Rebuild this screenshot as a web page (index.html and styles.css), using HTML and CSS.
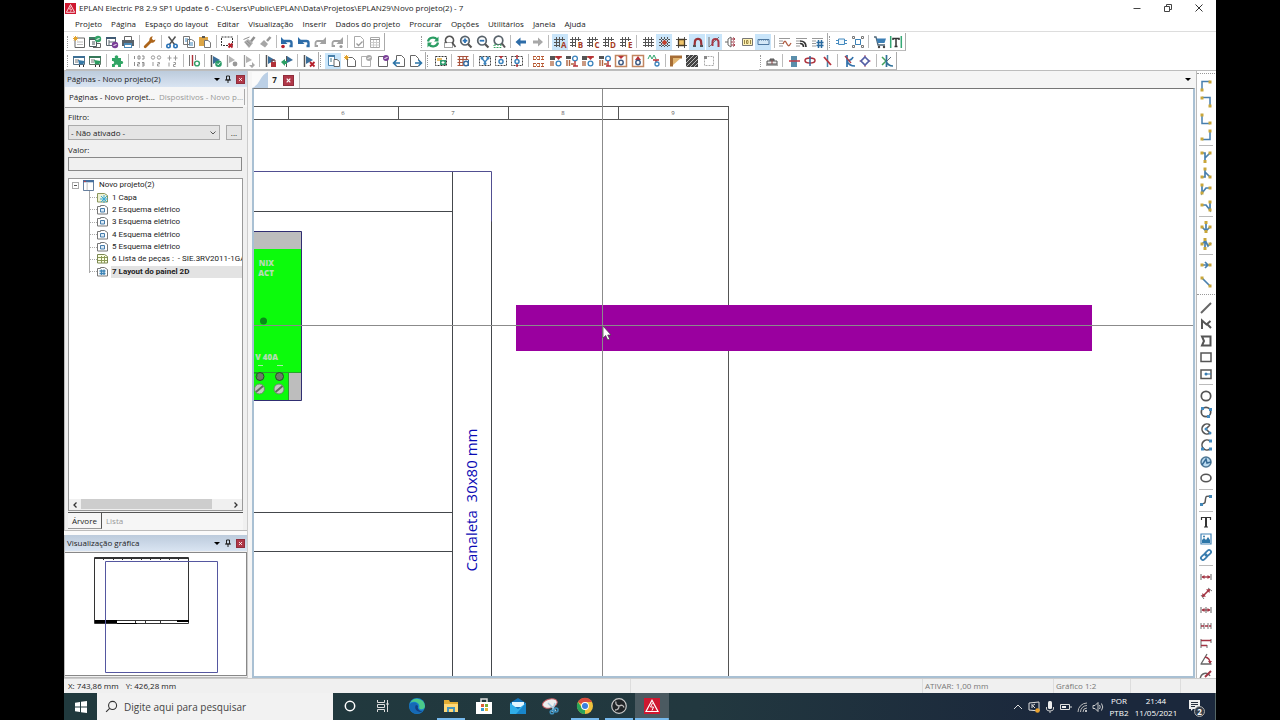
FILE: index.html
```html
<!DOCTYPE html>
<html lang="pt-BR">
<head>
<meta charset="utf-8">
<title>EPLAN Electric P8 2.9 SP1 Update 6</title>
<link rel="stylesheet" href="styles.css">
</head>
<body>
<svg class="sprite" aria-hidden="true">
  <defs>
    <!-- file and edit -->
    <symbol id="page-new" viewBox="0 0 16 16"><path d="M4 4h9.500v9.500h-9.500z" fill="#fff" stroke="#666"/><path d="M6 8h6M6 10.500h6" stroke="#bbb"/><path d="M4.500 2v5M2 4.500h5M2.700 2.700l3.600 3.600M6.300 2.700l-3.600 3.600" stroke="#e3a32c"/></symbol>
    <symbol id="page-open" viewBox="0 0 16 16"><path d="M2.500 3.500h7v9h-7zM2.500 5.500h7M5 8h3M5 10h3" fill="#fff" stroke="#4d5a5c"/><path d="M2 3h8v2H2z" fill="#3f7d64"/><circle cx="11" cy="5" r="3.200" fill="#35a46a"/><path d="M9.500 5.500l3-1" stroke="#fff"/><path d="M10 9.500h3.500v4H6" fill="none" stroke="#666"/></symbol>
    <symbol id="page-close" viewBox="0 0 16 16"><path d="M2.500 3.500h9v8h-9zM5 6v5M5 8h6" fill="#fff" stroke="#5c6870"/><path d="M2 3h10v2H2z" fill="#3f5a74"/><circle cx="11" cy="11" r="3.200" fill="#7b3f98"/><path d="M9.500 11.500l3-1" stroke="#fff"/></symbol>
    <symbol id="printer" viewBox="0 0 16 16"><path d="M4.500 2.500h7v4h-7z" fill="#fff" stroke="#666"/><path d="M2 6h12v6H2z" fill="#59636b"/><path d="M4 9h8v5H4z" fill="#4c8ab8"/><path d="M5 11h6v2H5z" fill="#fff"/></symbol>
    <symbol id="wrench" viewBox="0 0 16 16"><path d="M3.200 12.800L9 7" stroke="#ad651b" stroke-width="2.800" stroke-linecap="round"/><path d="M13.500 5.500a3.300 3.300 0 0 1-5.500 2.300a3.500 3.500 0 0 1 2.800-5.600L9.800 4.600l1.500 1.700z" fill="#ad651b"/></symbol>
    <symbol id="scissors" viewBox="0 0 16 16"><path d="M4.500 2.500l6 8M11.500 2.500l-6 8" stroke="#555" stroke-width="1.500"/><circle cx="4.500" cy="12" r="1.700" fill="none" stroke="#2b74b8" stroke-width="1.600"/><circle cx="11.500" cy="12" r="1.700" fill="none" stroke="#2b74b8" stroke-width="1.600"/></symbol>
    <symbol id="copy" viewBox="0 0 16 16"><path d="M2.500 2.500h6v8h-6zM6.500 5.500h4l3 2v6h-7z" fill="#fff" stroke="#777"/><path d="M4 5h3M4 7h2M8 9h4M8 11h4" stroke="#3f87bd"/></symbol>
    <symbol id="paste" viewBox="0 0 16 16"><path d="M2 3h9v9H2z" fill="#dca545"/><path d="M5 2h3v2H5z" fill="#555"/><path d="M7.500 6.500h3.500l2.500 2v5h-6z" fill="#fff" stroke="#777"/></symbol>
    <symbol id="select-delete" viewBox="0 0 16 16"><path d="M2.500 3h11v8.500h-11z" fill="none" stroke="#333" stroke-dasharray="2 1"/><path d="M9.500 9.500l4 4M13.500 9.500l-4 4" stroke="#b51f2b" stroke-width="1.800"/></symbol>
    <symbol id="brush" viewBox="0 0 16 16"><path d="M13.500 3L10 7.500" stroke="#8f8f8f" stroke-width="2.500"/><path d="M3 8l4-3 5 4-4 5z" fill="#adadad"/><path d="M2.500 5.500l6-2.500M4.500 8.500l4 3.500M6 7l4 3.500" stroke="#8c8c8c"/></symbol>
    <symbol id="brush-small" viewBox="0 0 16 16"><path d="M13.500 3L10 7" stroke="#999" stroke-width="2.500"/><path d="M3 10l4-4 4 4-3 3.500z" fill="#a6a6a6"/></symbol>
    <symbol id="undo" viewBox="0 0 16 16"><path d="M4 7h6.500a2 2 0 0 1 2 2v3H10.500" fill="none" stroke="#2d6ca8" stroke-width="2.400"/><path d="M2 3v7h6.500z" fill="#2d6ca8"/></symbol>
    <symbol id="undo-list" viewBox="0 0 16 16"><use href="#undo"/><circle cx="4" cy="12.500" r="1.800" fill="#b51f2b"/></symbol>
    <symbol id="redo" viewBox="0 0 16 16"><path d="M12 7H5.500a2 2 0 0 0-2 2v3H6" fill="none" stroke="#a2a2a2" stroke-width="1.800"/><path d="M14 3v7H7.500z" fill="#a2a2a2"/></symbol>
    <symbol id="redo-list" viewBox="0 0 16 16"><use href="#redo"/><circle cx="12" cy="12.500" r="1.600" fill="#999"/></symbol>
    <symbol id="page-check" viewBox="0 0 16 16"><path d="M3.500 2.500h6l3 3v8h-9z" fill="#fff" stroke="#aaa"/><path d="M5.500 9.500l2 2 4-4" fill="none" stroke="#999" stroke-width="1.300"/></symbol>
    <symbol id="table" viewBox="0 0 16 16"><path d="M3.500 3.500h9v10h-9z" fill="#fff" stroke="#aaa"/><path d="M3.500 5.500h9" stroke="#999"/><path d="M3.500 8.500h9M3.500 11h9M6.500 6v7M9.500 6v7" stroke="#ccc"/></symbol>
    <!-- view -->
    <symbol id="refresh" viewBox="0 0 16 16"><path d="M3 7.500a5 4.500 0 0 1 9-2M13 8.500a5 4.500 0 0 1-9 2" fill="none" stroke="#2a9d63" stroke-width="2.200"/><path d="M13.500 2.500v5H9zM2.500 13.500v-5H7z" fill="#2a9d63"/></symbol>
    <symbol id="zoom-area" viewBox="0 0 16 16"><path d="M4.500 9a4 4 0 1 1 6 0l3 4" fill="none" stroke="#555" stroke-width="1.700"/><path d="M2.500 8.500h8v5h-8z" fill="none" stroke="#444" stroke-dasharray="1 1"/></symbol>
    <symbol id="zoom-out" viewBox="0 0 16 16"><circle cx="7" cy="6.700" r="4.300" fill="#fff" stroke="#59636b" stroke-width="1.700"/><path d="M10 10l3.500 3.500" stroke="#555" stroke-width="2.200"/><path d="M4.700 6.700h4.600" stroke="#2b74b8" stroke-width="1.800"/></symbol>
    <symbol id="zoom-in" viewBox="0 0 16 16"><use href="#zoom-out"/><path d="M7 4.400v4.600" stroke="#2b74b8" stroke-width="1.800"/></symbol>
    <symbol id="zoom-all" viewBox="0 0 16 16"><circle cx="7.500" cy="6.500" r="4.300" fill="none" stroke="#59636b" stroke-width="1.700"/><path d="M11 9.500l3 4" stroke="#555" stroke-width="2"/><path d="M3 11h7v2.500H3z" fill="#fff" stroke="#36a360" stroke-dasharray="2 1"/></symbol>
    <symbol id="arrow-left" viewBox="0 0 16 16"><path d="M2.500 8l5-4.500v3H13v3H7.500v3z" fill="#2d6ca8"/></symbol>
    <symbol id="arrow-right" viewBox="0 0 16 16"><path d="M13 8L8 3.500v3H3v3h5v3z" fill="#a8a8a8"/></symbol>
    <symbol id="grid" viewBox="0 0 16 16"><path d="M5.500 3v10M8.500 3v10M11.500 3v10M3 5.500h11M3 8.500h11M3 11.500h11" stroke="#555"/></symbol>
    <symbol id="grid-letter" viewBox="0 0 16 16"><path d="M4.500 3v10M7.500 3v10M10.500 3v4M2 5.500h11M2 8.500h6M2 11.500h6" stroke="#555"/></symbol>
    <symbol id="snap-grid" viewBox="0 0 16 16"><path d="M5.500 3v10M8.500 3v10M11.500 3v10M3 5.500h11M3 8.500h11M3 11.500h11" stroke="#555" stroke-dasharray="2 1"/><circle cx="8.500" cy="8.500" r="2.300" fill="#c4402d"/></symbol>
    <symbol id="align-grid" viewBox="0 0 16 16"><path d="M5.500 3v11M11.500 3v11M3 5.500h11M3 11.500h11" stroke="#555"/><path d="M5.500 5.500h6v6h-6z" fill="#f0c46a" stroke="#493b26" stroke-width="1.300"/></symbol>
    <symbol id="magnet" viewBox="0 0 16 16"><path d="M5.500 12L6 7a3.200 3.200 0 0 1 6 0l.5 5" fill="none" stroke="#9b3136" stroke-width="2.200"/><path d="M4 11h3v2H4zM11 11h3v2h-3z" fill="#555"/></symbol>
    <symbol id="magnet-line" viewBox="0 0 16 16"><path d="M3 3v10M3 13L13 3" stroke="#777"/><path d="M6.500 12V8a3 3 0 0 1 6 0v5" fill="none" stroke="#a73845" stroke-width="2"/></symbol>
    <symbol id="plug" viewBox="0 0 16 16"><path d="M3 8h3M6 5l3-2v10L6 11z" fill="none" stroke="#666"/><path d="M9 5h4M9 11h4M9 8h4M11 3.500l2 1.500-2 1.500M11 9.500l2 1.500-2 1.500" fill="none" stroke="#a23b48"/></symbol>
    <symbol id="value-box" viewBox="0 0 16 16"><path d="M3.500 4.500h10v7h-10z" fill="#fff2b5" stroke="#777"/><path d="M5.500 6v4M7.500 6.500h1.500v3H7.500zM11.500 6v4" fill="none" stroke="#998542"/></symbol>
    <symbol id="input-box" viewBox="0 0 16 16"><path d="M3 5.500h11v5H3z" fill="#d4e8f7" stroke="#4e78a0"/><path d="M4 6.500h9" stroke="#8aaac6" stroke-dasharray="1 1"/></symbol>
    <symbol id="lines-wave" viewBox="0 0 16 16"><path d="M2 4.500h11M2 7h4M2 9.500h4M2 12h4" stroke="#999"/><path d="M6 10c2-5 3-2 4 0s2 3 4-1" fill="none" stroke="#b05e43" stroke-width="1.300"/></symbol>
    <symbol id="lines-arc" viewBox="0 0 16 16"><path d="M2 4.500h11M2 7h4M2 9.500h4M2 12h4" stroke="#999"/><path d="M6 7q6 0 6 6M6 9.500q3.500 0 3.500 3.500" fill="none" stroke="#333" stroke-width="1.700"/></symbol>
    <symbol id="lines-grid" viewBox="0 0 16 16"><path d="M2 4.500h11M2 7h4M2 9.500h4M2 12h4" stroke="#999"/><path d="M8.500 6v8M11.500 6v8M6.500 8.500h7M6.500 11.500h7" stroke="#2b6ba0" stroke-width="1.500"/></symbol>
    <symbol id="box-ports" viewBox="0 0 16 16"><path d="M5.500 5h6v5.500h-6z" fill="#eef7fd" stroke="#458abf"/><path d="M3 6.500h2M3 9.500h2M12 6.500h2M12 9.500h2" stroke="#458abf"/></symbol>
    <symbol id="box-nodes" viewBox="0 0 16 16"><path d="M3 3l10 10M13 3L3 13" stroke="#999"/><path d="M5.500 5.500h5v5h-5z" fill="#fff" stroke="#3d83b8"/><path d="M2.500 2.500h2v2h-2zM11.500 2.500h2v2h-2zM2.500 11.500h2v2h-2zM11.500 11.500h2v2h-2z" fill="#fff" stroke="#777"/></symbol>
    <symbol id="cart" viewBox="0 0 16 16"><path d="M2 3h2l2 8h7" fill="none" stroke="#4d6577" stroke-width="1.300"/><path d="M4.500 4.500H14l-1.500 4.500H5.700z" fill="#3c7fb5"/><circle cx="7" cy="13" r="1.200" fill="#444"/><circle cx="12" cy="13" r="1.200" fill="#444"/></symbol>
    <symbol id="text-bars" viewBox="0 0 16 16"><path d="M2.700 2v12M13.300 2v12" stroke="#36a875" stroke-width="1.500"/><path d="M5 6V4.500h6V6M8 4.500v8M6.500 12.500h3" fill="none" stroke="#333" stroke-width="1.500"/></symbol>
    <!-- devices -->
    <symbol id="window-cart" viewBox="0 0 16 16"><path d="M2.500 3.500h11v8h-11z" fill="#fff" stroke="#557084"/><path d="M2 3h12v2H2z" fill="#3c6f94"/><path d="M4 7h4M4 9h3" stroke="#777"/><path d="M7 7l6.500 1-1 3H8z" fill="#3479a8"/><path d="M8 13h1M12 13h1" stroke="#333" stroke-width="2"/></symbol>
    <symbol id="window-cart-green" viewBox="0 0 16 16"><path d="M2.500 3.500h11v8h-11z" fill="#fff" stroke="#5c7566"/><path d="M2 3h12v2H2z" fill="#36785a"/><path d="M4 7h4M4 9h3" stroke="#777"/><path d="M7 7l6.500 1-1 3H8z" fill="#2c9c60"/><path d="M8 13h1M12 13h1" stroke="#333" stroke-width="2"/></symbol>
    <symbol id="puzzle" viewBox="0 0 16 16"><path d="M3 5h3a1.800 1.800 0 1 1 3 0h3v3a1.600 1.600 0 1 1 0 3v3H9a1.700 1.700 0 1 0-3 0H3v-3a1.600 1.600 0 1 0 0-3z" fill="#31a565"/></symbol>
    <symbol id="number-list" viewBox="0 0 16 16"><path d="M3.500 3v3M7 3h2v3H7zM11 3h2v3h-2M3.500 9v4M6.500 9.500h2v1.500h-2v2h2M11 9.500h2v3.500h-2M11 11h2" fill="none" stroke="#8d8d8d"/></symbol>
    <symbol id="number-pair" viewBox="0 0 16 16"><circle cx="5" cy="4.500" r="1.700" fill="none" stroke="#999"/><circle cx="11" cy="4.500" r="1.700" fill="none" stroke="#999"/><path d="M5 9v4M9.500 9.500h2v1.500h-2v2h2" fill="none" stroke="#999"/></symbol>
    <symbol id="number-stack" viewBox="0 0 16 16"><path d="M5.500 2.500v5M3.500 5h4M11.500 2.500v5M9.500 5h4M5 9.500v4M9.500 9.500h2v2h-2v2h2" fill="none" stroke="#999"/></symbol>
    <symbol id="bars-circle" viewBox="0 0 16 16"><path d="M3.500 2v11" stroke="#777"/><path d="M6.500 2v11" stroke="#ae3038" stroke-width="1.400"/><path d="M9.500 2v5" stroke="#888"/><circle cx="11" cy="10.500" r="2.400" fill="#fff" stroke="#329f68" stroke-width="1.400"/></symbol>
    <symbol id="flag" viewBox="0 0 16 16"><path d="M3.500 2v12" stroke="#555" stroke-width="1.500"/><path d="M5 3l7 4-7 4z" fill="#3a6d99"/></symbol>
    <symbol id="flag-gray" viewBox="0 0 16 16"><path d="M3.500 2v12" stroke="#999" stroke-width="1.300"/><path d="M5 3l6 4-6 3z" fill="#b4b4b4"/></symbol>
    <symbol id="flag-ok" viewBox="0 0 16 16"><use href="#flag"/><circle cx="10.500" cy="10.700" r="3.300" fill="#2a9b67"/><path d="M9 10.500l1.200 1.300 2-2.500" fill="none" stroke="#fff"/></symbol>
    <symbol id="flag-off" viewBox="0 0 16 16"><use href="#flag-gray"/><circle cx="11" cy="11" r="2.400" fill="#999"/></symbol>
    <symbol id="flag-next" viewBox="0 0 16 16"><use href="#flag-gray"/><path d="M8 12h3V9l3 3-3 3" fill="#aaa"/></symbol>
    <symbol id="flag-lock" viewBox="0 0 16 16"><use href="#flag"/><path d="M8 9h5v5H8z" fill="#b13038"/><path d="M9 9V7h3v2" fill="none" stroke="#783434"/></symbol>
    <symbol id="flag-sync" viewBox="0 0 16 16"><path d="M7.500 3v11" stroke="#555"/><path d="M8 3l6 4-6 3z" fill="#3a6d99"/><path d="M2 9l4-3v2h2v3H6v2z" fill="#2d9f65"/></symbol>
    <symbol id="flag-delete" viewBox="0 0 16 16"><use href="#flag"/><path d="M9 9l4.500 4.500M13.500 9L9 13.500" stroke="#b51f2b" stroke-width="1.800"/></symbol>
    <!-- pages -->
    <symbol id="page-tree" viewBox="0 0 16 16"><path d="M3.500 2.500h6v10h-6z" fill="#fff" stroke="#4f87b2"/><path d="M3 2h7v2H3z" fill="#477fa9"/><path d="M5 6h2M5 8h2" stroke="#478"/><path d="M9 6.500h3l2.500 2v5H9z" fill="#fff" stroke="#666"/></symbol>
    <symbol id="page-star" viewBox="0 0 16 16"><path d="M5.500 4.500h5l3 3v6h-8z" fill="#fff" stroke="#666"/><path d="M4.500 2v5M2 4.500h5M2.700 2.700l3.600 3.600M6.300 2.700l-3.600 3.600" stroke="#e3a32c"/></symbol>
    <symbol id="page-gray" viewBox="0 0 16 16"><path d="M3.500 3.500h9v10h-9z" fill="#fff" stroke="#b0b0b0"/><circle cx="11" cy="5" r="3" fill="#aaa"/><path d="M9.500 5.500l3-1" stroke="#fff"/></symbol>
    <symbol id="page-violet" viewBox="0 0 16 16"><path d="M3.500 3.500h9v10h-9z" fill="#fff" stroke="#666"/><circle cx="11" cy="5" r="3" fill="#7b3f98"/><path d="M9.500 5.500l3-1" stroke="#fff"/></symbol>
    <symbol id="page-prev" viewBox="0 0 16 16"><path d="M5.500 7V2.500h5l3 3v8h-8V13" fill="#fff" stroke="#666"/><path d="M9 10H3M5.500 7L2.500 10l3 3" fill="none" stroke="#2b74a8" stroke-width="1.600"/></symbol>
    <symbol id="page-next" viewBox="0 0 16 16"><path d="M10.500 13.500h-8v-11h5l3 3V7" fill="#fff" stroke="#666"/><path d="M7 10h6M10.500 7l3 3-3 3" fill="none" stroke="#2b74a8" stroke-width="1.600"/></symbol>
    <!-- macros and connections -->
    <symbol id="macro-box" viewBox="0 0 16 16"><path d="M2.500 3.500h11v9h-11z" fill="#fff" stroke="#333" stroke-dasharray="2 1"/><path d="M4 5h5v3H4z" fill="#eac16c"/><path d="M7 7h6v5H7z" fill="#339e70"/><path d="M8.500 9.500h3M10 8v3" stroke="#fff"/></symbol>
    <symbol id="rack" viewBox="0 0 16 16"><path d="M2.500 3.500h11M2.500 6.500h11M2.500 9.500h6M2.500 12.500h6M4.500 3v10M8 3v10M11.500 3v4" stroke="#a9533d" stroke-width="1.200"/><circle cx="11" cy="10.500" r="2.300" fill="#fff" stroke="#366ba1" stroke-width="1.400"/><path d="M13.500 7v6" stroke="#366ba1"/></symbol>
    <symbol id="node-box" viewBox="0 0 16 16"><path d="M2.500 3.500h11v9h-11z" fill="none" stroke="#444" stroke-dasharray="2 1"/><circle cx="8" cy="8.500" r="2" fill="#fff" stroke="#3b83bd" stroke-width="1.500"/></symbol>
    <symbol id="node-split" viewBox="0 0 16 16"><path d="M2.500 3.500h11v9h-11z" fill="none" stroke="#444" stroke-dasharray="2 1"/><path d="M5 5.500L8 9l3-3.500M8 9v2" fill="none" stroke="#3b83bd" stroke-width="1.400"/><circle cx="5" cy="5" r="1.500" fill="#3b83bd"/><circle cx="11" cy="5" r="1.500" fill="#3b83bd"/><circle cx="8" cy="10.500" r="1.500" fill="#3b83bd"/></symbol>
    <symbol id="node-in" viewBox="0 0 16 16"><use href="#node-box"/><path d="M6 3h4L8 6z" fill="#b73036"/></symbol>
    <symbol id="node-through" viewBox="0 0 16 16"><use href="#node-box"/><path d="M8 2v4M8 11v3" stroke="#b73036" stroke-width="1.500"/></symbol>
    <symbol id="tiles" viewBox="0 0 16 16"><path d="M2 3.500h12M2 6.500h12M2 10.500h12M2 13.500h12" stroke="#b65636" stroke-dasharray="3 1"/><path d="M2 5h12M2 12h12" stroke="#c98a5e" stroke-width="2" stroke-dasharray="1 2"/></symbol>
    <symbol id="place-node" viewBox="0 0 16 16"><path d="M2 3h5v4H2z" fill="#555"/><path d="M3 8v5M5 8v5M7 4h7" stroke="#af643f" stroke-width="1.300"/><path d="M7 3h7l-3.500 4z" fill="#b73036"/><circle cx="10.500" cy="10.500" r="2.400" fill="#fff" stroke="#3b83bd" stroke-width="1.300"/></symbol>
    <symbol id="place-wire" viewBox="0 0 16 16"><path d="M2 3h5v3H2z" fill="#555"/><path d="M3 7v6M5.500 7v6M7 11h3" stroke="#af643f" stroke-width="1.400"/><circle cx="11" cy="5.500" r="2.400" fill="#fff" stroke="#3b83bd" stroke-width="1.300"/><path d="M11 8v5M9 13h5" stroke="#b73036" stroke-width="1.400"/></symbol>
    <symbol id="frame-down" viewBox="0 0 16 16"><path d="M2.500 2.500h11v11h-11z" fill="#fff" stroke="#c28661" stroke-width="1.500"/><path d="M5 3h6L8 6z" fill="#b73036"/><circle cx="8" cy="9.500" r="2.200" fill="#fff" stroke="#435f87" stroke-width="1.500"/></symbol>
    <symbol id="frame-up" viewBox="0 0 16 16"><path d="M2.500 2.500h11v11h-11z" fill="#fff" stroke="#c28661" stroke-width="1.500"/><path d="M5 7h6L8 3z" fill="#b73036"/><circle cx="8" cy="9.500" r="2.200" fill="#fff" stroke="#435f87" stroke-width="1.500"/></symbol>
    <symbol id="wire-wave" viewBox="0 0 16 16"><path d="M2 6l2-4 2 4 2-4 2 4" fill="none" stroke="#32a56d"/><path d="M7 7h6M10 7v3" stroke="#b73036" stroke-width="1.400"/><circle cx="11" cy="11" r="2" fill="#fff" stroke="#3b83bd" stroke-width="1.300"/></symbol>
    <symbol id="angle-ruler" viewBox="0 0 16 16"><path d="M3.500 13.500V4H14" fill="none" stroke="#a66d35" stroke-width="3"/><path d="M5 12L13 5H5z" fill="#e2b672"/></symbol>
    <symbol id="hatch" viewBox="0 0 16 16"><path d="M2 2h12v12H2z" fill="#444"/><path d="M2 6l4-4M2 10l8-8M2 14L14 2M6 14l8-8M10 14l4-4" stroke="#bbb"/></symbol>
    <symbol id="dash-rect" viewBox="0 0 16 16"><path d="M3.500 3.500h9v9h-9z" fill="none" stroke="#aaa" stroke-dasharray="2 1"/><path d="M3 3h3v3H3z" fill="#888"/></symbol>
    <symbol id="terminal" viewBox="0 0 16 16"><path d="M3 8h10v3H3z" fill="#eee" stroke="#555"/><path d="M2 12h12M6 8V6h4v2" fill="#777" stroke="#555"/><path d="M8 7v4" stroke="#8c4143"/></symbol>
    <symbol id="strip" viewBox="0 0 16 16"><path d="M5 3h6v11H5z" fill="#5a8eab"/><path d="M3 8h11" stroke="#c33944" stroke-width="1.500"/></symbol>
    <symbol id="ring-cross" viewBox="0 0 16 16"><ellipse cx="8" cy="7.500" rx="5" ry="2.500" fill="none" stroke="#ad303b" stroke-width="1.500"/><path d="M8 3v10" stroke="#36659b" stroke-width="1.500"/></symbol>
    <symbol id="line-cross" viewBox="0 0 16 16"><path d="M8.500 2v12" stroke="#4b85aa" stroke-width="1.500"/><path d="M5 4l7 8" stroke="#b8343e" stroke-width="1.800"/></symbol>
    <symbol id="cable-k" viewBox="0 0 16 16"><path d="M6 2v12M6 8q5-1 6-4M6 8q2 5 8 5" fill="none" stroke="#3272ab" stroke-width="1.700"/><path d="M4 3l6 7" stroke="#ac3e49" stroke-width="1.300"/></symbol>
    <symbol id="ring-diamond" viewBox="0 0 16 16"><path d="M8 2v12M2.500 8h11" stroke="#b44965"/><path d="M8 4l4 4-4 4-4-4z" fill="#fff" stroke="#545fa6" stroke-width="1.700"/></symbol>
    <symbol id="cable-green" viewBox="0 0 16 16"><path d="M3 4l4 4-4 4" fill="none" stroke="#45a35b" stroke-width="1.500"/><path d="M7.500 2v12M7 8q2 5 7 5" fill="none" stroke="#317198" stroke-width="1.700"/><path d="M8 8l4-4" stroke="#5c6d78"/></symbol>
    <!-- angle connections -->
    <g id="dot"><path d="M-1.500-1.500h3v3h-3z" fill="#c9a63a"/></g>
    <symbol id="c-tl" viewBox="0 0 16 16"><path d="M4 12.500v-9h8" fill="none" stroke="#477fae" stroke-width="1.500"/><use href="#dot" x="4" y="12"/><use href="#dot" x="12" y="4"/></symbol>
    <symbol id="c-tr" viewBox="0 0 16 16"><path d="M4 3.500h8v9" fill="none" stroke="#477fae" stroke-width="1.500"/><use href="#dot" x="4" y="4"/><use href="#dot" x="12" y="12"/></symbol>
    <symbol id="c-bl" viewBox="0 0 16 16"><path d="M4 4v8.500h8" fill="none" stroke="#477fae" stroke-width="1.500"/><use href="#dot" x="4" y="4"/><use href="#dot" x="12" y="12"/></symbol>
    <symbol id="c-br" viewBox="0 0 16 16"><path d="M4 12.500h8V4" fill="none" stroke="#477fae" stroke-width="1.500"/><use href="#dot" x="4" y="12"/><use href="#dot" x="12" y="4"/></symbol>
    <symbol id="t-down" viewBox="0 0 16 16"><path d="M3 4h4v8M7 9l5-5" fill="none" stroke="#477fae" stroke-width="1.700"/><use href="#dot" x="4" y="4"/><use href="#dot" x="12" y="4"/><use href="#dot" x="7" y="12.500"/></symbol>
    <symbol id="t-up" viewBox="0 0 16 16"><path d="M3 12h4V4M7 7l5 5" fill="none" stroke="#477fae" stroke-width="1.700"/><use href="#dot" x="4" y="12"/><use href="#dot" x="12" y="12"/><use href="#dot" x="7" y="4"/></symbol>
    <symbol id="t-right" viewBox="0 0 16 16"><path d="M4 3v9l4-5h5" fill="none" stroke="#477fae" stroke-width="1.700"/><use href="#dot" x="4" y="4"/><use href="#dot" x="12" y="7"/><use href="#dot" x="4" y="12"/></symbol>
    <symbol id="t-left" viewBox="0 0 16 16"><path d="M3 7h5l4 5V3" fill="none" stroke="#477fae" stroke-width="1.700"/><use href="#dot" x="4" y="7"/><use href="#dot" x="12" y="4"/><use href="#dot" x="12" y="12"/></symbol>
    <symbol id="t-cross" viewBox="0 0 16 16"><path d="M8 3v9M4 8l4 4 4-4" fill="none" stroke="#477fae" stroke-width="1.700"/><use href="#dot" x="8" y="3.500"/><use href="#dot" x="4" y="8"/><use href="#dot" x="12" y="8"/><use href="#dot" x="8" y="12.500"/></symbol>
    <symbol id="t-zig" viewBox="0 0 16 16"><path d="M4 8l3-3v7M7 4l3 6 3-3" fill="none" stroke="#477fae" stroke-width="1.700"/><use href="#dot" x="7" y="3.500"/><use href="#dot" x="4" y="8"/><use href="#dot" x="12" y="8"/><use href="#dot" x="7" y="12.500"/></symbol>
    <symbol id="jump" viewBox="0 0 16 16"><path d="M3 8h9M7 5l3 3-3 3" fill="none" stroke="#477fae" stroke-width="1.700"/><use href="#dot" x="4" y="8"/><use href="#dot" x="12" y="8"/></symbol>
    <symbol id="diagonal" viewBox="0 0 16 16"><path d="M4 4l8 8" stroke="#477fae" stroke-width="1.700"/><use href="#dot" x="4" y="4"/><use href="#dot" x="12" y="12"/></symbol>
    <!-- graphics -->
    <symbol id="g-line" viewBox="0 0 16 16"><path d="M3 13L13 3" stroke="#666" stroke-width="2"/></symbol>
    <symbol id="g-poly" viewBox="0 0 16 16"><path d="M4 13V4.500l4.500 4 4-3.500M9 8l4 4" fill="none" stroke="#555" stroke-width="2"/></symbol>
    <symbol id="g-polygon" viewBox="0 0 16 16"><path d="M4 3.500h8.500v9H4l2-4.500z" fill="none" stroke="#555" stroke-width="2"/></symbol>
    <symbol id="g-rect" viewBox="0 0 16 16"><path d="M3 4h10v8.500H3z" fill="none" stroke="#555" stroke-width="1.500"/></symbol>
    <symbol id="g-rect-center" viewBox="0 0 16 16"><path d="M3 4h10v8.500H3z" fill="none" stroke="#555" stroke-width="1.500"/><path d="M7 8h6" stroke="#377bb0"/><circle cx="8" cy="8" r="1.500" fill="#377bb0"/></symbol>
    <symbol id="g-circle" viewBox="0 0 16 16"><circle cx="8" cy="8" r="4.700" fill="none" stroke="#555" stroke-width="1.700"/></symbol>
    <symbol id="g-circle-3" viewBox="0 0 16 16"><use href="#g-circle"/><path d="M3 3h3v3H3zM11 4h3v3h-3zM9 11h3v3H9z" fill="#438bc1"/></symbol>
    <symbol id="g-arc-center" viewBox="0 0 16 16"><path d="M12 4a5 5 0 1 0 0 8M12 4L8 8l4 4" fill="none" stroke="#555" stroke-width="1.600"/><circle cx="8" cy="8" r="1.500" fill="#438bc1"/><circle cx="12" cy="12" r="1.500" fill="#438bc1"/></symbol>
    <symbol id="g-arc" viewBox="0 0 16 16"><path d="M12 4a5 5 0 1 0 0 8" fill="none" stroke="#555" stroke-width="1.600"/><path d="M11 2.500h3v3h-3zM11 10.500h3v3h-3zM3 10.500h3v3H3z" fill="#438bc1"/></symbol>
    <symbol id="g-sector" viewBox="0 0 16 16"><circle cx="8" cy="8" r="5" fill="#b9daf0" stroke="#4d7694" stroke-width="1.500"/><path d="M4 11l4-6 1 4 4-1" fill="none" stroke="#376b95" stroke-width="1.500"/></symbol>
    <symbol id="g-ellipse" viewBox="0 0 16 16"><ellipse cx="8" cy="8" rx="5" ry="3.800" fill="none" stroke="#555" stroke-width="1.600"/></symbol>
    <symbol id="g-spline" viewBox="0 0 16 16"><path d="M3 12c5 0 4-2 4.500-5S8 4 13 4" fill="none" stroke="#555" stroke-width="1.500"/><path d="M2 11h3v3H2zM11 3h3v3h-3z" fill="#4387b7"/></symbol>
    <symbol id="g-text" viewBox="0 0 16 16"><path d="M3.500 6V3.500h9V6M6 13h4" fill="none" stroke="#333" stroke-width="1.200"/><path d="M8 3.500V13" stroke="#333" stroke-width="2"/></symbol>
    <symbol id="g-image" viewBox="0 0 16 16"><path d="M3 3h10v10H3z" fill="#fff" stroke="#4283b6" stroke-width="1.200"/><path d="M4 12V9l2-2 2 2 2-3 2 3v3z" fill="#2c76a8"/><circle cx="6" cy="5.500" r="1" fill="#2c76a8"/></symbol>
    <symbol id="g-link" viewBox="0 0 16 16"><rect x="2.500" y="8" width="7" height="4" rx="2" transform="rotate(-45 6 10)" fill="none" stroke="#397daf" stroke-width="1.700"/><rect x="6.500" y="4" width="7" height="4" rx="2" transform="rotate(-45 10 6)" fill="none" stroke="#397daf" stroke-width="1.700"/></symbol>
    <symbol id="dim-line" viewBox="0 0 16 16"><path d="M3 5v6M13 5v6" stroke="#666"/><path d="M4 8h8" stroke="#a33645" stroke-width="1.400"/><path d="M3.500 8l3-2v4zM12.500 8l-3-2v4z" fill="#a33645"/></symbol>
    <symbol id="dim-diag" viewBox="0 0 16 16"><path d="M3 10l3 4M10 3l4 3" stroke="#777"/><path d="M4.500 11.500l7-7" stroke="#a33645" stroke-width="1.600"/><path d="M4 12l.5-4 3.500 3.500zM12 4l-4 .5 3.500 3.500z" fill="#a33645"/></symbol>
    <symbol id="dim-chain" viewBox="0 0 16 16"><use href="#dim-line"/><path d="M8 5v6" stroke="#666"/></symbol>
    <symbol id="dim-steps" viewBox="0 0 16 16"><path d="M3 5v6M6 5v6M10 5v6M13 5v6" stroke="#777"/><path d="M3 8h10" stroke="#a33645" stroke-dasharray="3 1" stroke-width="1.500"/></symbol>
    <symbol id="dim-base" viewBox="0 0 16 16"><path d="M3 4v9M13 4v4M9 10v3" stroke="#666"/><path d="M3 5.500h10M3 10.500h6" stroke="#a33645" stroke-width="1.700"/></symbol>
    <symbol id="dim-angle" viewBox="0 0 16 16"><path d="M2.500 13h11M3 13L9 3" fill="none" stroke="#666" stroke-width="1.300"/><path d="M7 6q5 1 5 6" fill="none" stroke="#a33645" stroke-width="1.400"/><path d="M10 10h4l-2 3z" fill="#a33645"/></symbol>
    <symbol id="dim-radius" viewBox="0 0 16 16"><path d="M3 13a5 5 0 0 1 9-5" fill="none" stroke="#666" stroke-width="1.500"/><path d="M7 9l6-6" stroke="#a33645" stroke-width="2"/></symbol>
    <!-- page kinds in the tree -->
    <symbol id="k-schema" viewBox="0 0 12 12"><path d="M.5 2.500h3v-1h4l3 2v6.500H.5z" fill="#fff" stroke="#777"/><path d="M3.500 4.500h4v3.500h-4z" fill="#dbeaf6" stroke="#467caa"/></symbol>
    <symbol id="k-cover" viewBox="0 0 12 12"><path d="M.5 1.500h7l3 2v6.500H.5z" fill="#eef2d4" stroke="#8a965c"/><path d="M7 3v8M3 7h8M4 4l6 6M10 4l-6 6" stroke="#38aad8"/></symbol>
    <symbol id="k-list" viewBox="0 0 12 12"><path d="M.5 1.500h7l3 2v6.500H.5z" fill="#fbffe4" stroke="#7b8751"/><path d="M1 4.500h9M1 7.500h9M4.500 3v7M7.500 3v7" stroke="#8c9a55"/></symbol>
    <symbol id="k-layout" viewBox="0 0 12 12"><path d="M.5 2.500h3v-1h4l3 2v6.500H.5z" fill="#fff" stroke="#777"/><path d="M2.500 5h6M2.500 7.500h6M4.500 3.500v5.500M7 3.500v5.500" stroke="#3d84b6" stroke-width="1.300"/></symbol>
    <symbol id="k-project" viewBox="0 0 12 12"><path d="M.5.500h11v11H.500z" fill="#fff" stroke="#526f92"/><path d="M0 0h12v2.500H0z" fill="#456f9e"/><path d="M1 1h2v1H1z" fill="#d33"/><path d="M4.500 3v8" stroke="#bbb"/></symbol>
    <symbol id="pin" viewBox="0 0 8 8"><path d="M2.500 1h3v4h-3zM1 5h6M4 5v3" fill="none" stroke="#222"/></symbol>
    <symbol id="cross" viewBox="0 0 10 10"><path d="M3 3l4 4M7 3L3 7" stroke="#fff" stroke-width="1.300"/></symbol>
    <symbol id="eplan" viewBox="0 0 16 16"><path d="M0 0h16v16H0z" fill="#cf1830"/><path d="M8 2.200L14 13.500H2z" fill="none" stroke="#fff" stroke-width="1.200"/><path d="M8.500 5L6.500 9h3L8 12.500" fill="none" stroke="#fff"/></symbol>
  </defs>
</svg>

<div class="app">
  <header class="titlebar">
    <svg class="app-icon"><use href="#eplan"/></svg>
    <h1>EPLAN Electric P8 2.9 SP1 Update 6 - C:\Users\Public\EPLAN\Data\Projetos\EPLAN29\Novo projeto(2) - 7</h1>
    <div class="window-buttons">
      <button aria-label="Minimizar"><svg viewBox="0 0 10 10"><path d="M1.500 5.500h7" stroke="#444"/></svg></button>
      <button aria-label="Restaurar"><svg viewBox="0 0 10 10"><path d="M1.500 3.500h5v5h-5zM3.500 3V1.500h5v5H7" fill="none" stroke="#444"/></svg></button>
      <button aria-label="Fechar"><svg viewBox="0 0 10 10"><path d="M1.500 1.500l7 7M8.500 1.500l-7 7" stroke="#333"/></svg></button>
    </div>
  </header>

  <nav class="menubar">
    <button>Projeto</button><button>Página</button><button>Espaço do layout</button><button>Editar</button><button>Visualização</button><button>Inserir</button><button>Dados do projeto</button><button>Procurar</button><button>Opções</button><button>Utilitários</button><button>Janela</button><button>Ajuda</button>
  </nav>

  <div class="toolbars">
    <div class="toolbar-row">
      <div class="toolbar tb-file" role="toolbar" aria-label="Arquivo">
        <button aria-label="Novo"><svg><use href="#page-new"/></svg></button>
        <button aria-label="Abrir"><svg><use href="#page-open"/></svg></button>
        <button aria-label="Fechar projeto"><svg><use href="#page-close"/></svg></button>
        <button aria-label="Imprimir"><svg><use href="#printer"/></svg></button>
        <i></i>
        <button aria-label="Configurações"><svg><use href="#wrench"/></svg></button>
        <i></i>
        <button aria-label="Cortar"><svg><use href="#scissors"/></svg></button>
        <button aria-label="Copiar"><svg><use href="#copy"/></svg></button>
        <button aria-label="Colar"><svg><use href="#paste"/></svg></button>
        <i></i>
        <button aria-label="Excluir seleção"><svg><use href="#select-delete"/></svg></button>
        <i></i>
        <button aria-label="Copiar formato"><svg><use href="#brush"/></svg></button>
        <button aria-label="Atribuir formato"><svg><use href="#brush-small"/></svg></button>
        <i></i>
        <button aria-label="Lista de desfazer"><svg><use href="#undo-list"/></svg></button>
        <button aria-label="Desfazer"><svg><use href="#undo"/></svg></button>
        <button aria-label="Refazer"><svg><use href="#redo"/></svg></button>
        <button aria-label="Lista de refazer"><svg><use href="#redo-list"/></svg></button>
        <i></i>
        <button aria-label="Verificar"><svg><use href="#page-check"/></svg></button>
        <button aria-label="Tabela"><svg><use href="#table"/></svg></button>
      </div>
      <div class="toolbar tb-view" role="toolbar" aria-label="Visualização">
        <button aria-label="Atualizar"><svg><use href="#refresh"/></svg></button>
        <button aria-label="Zoom de janela"><svg><use href="#zoom-area"/></svg></button>
        <button aria-label="Ampliar"><svg><use href="#zoom-in"/></svg></button>
        <button aria-label="Reduzir"><svg><use href="#zoom-out"/></svg></button>
        <button aria-label="Página inteira"><svg><use href="#zoom-all"/></svg></button>
        <i></i>
        <button aria-label="Voltar"><svg><use href="#arrow-left"/></svg></button>
        <button aria-label="Avançar"><svg><use href="#arrow-right"/></svg></button>
        <i></i>
        <button class="on letter"><svg aria-hidden="true"><use href="#grid-letter"/></svg><b>A</b></button>
        <button class="letter"><svg aria-hidden="true"><use href="#grid-letter"/></svg><b>B</b></button>
        <button class="letter"><svg aria-hidden="true"><use href="#grid-letter"/></svg><b>C</b></button>
        <button class="letter"><svg aria-hidden="true"><use href="#grid-letter"/></svg><b>D</b></button>
        <button class="letter"><svg aria-hidden="true"><use href="#grid-letter"/></svg><b>E</b></button>
        <i></i>
        <button aria-label="Grade"><svg><use href="#grid"/></svg></button>
        <button class="on" aria-label="Ajustar à grade"><svg><use href="#snap-grid"/></svg></button>
        <button aria-label="Alinhar à grade"><svg><use href="#align-grid"/></svg></button>
        <button class="on" aria-label="Ajuste a objetos"><svg><use href="#magnet"/></svg></button>
        <button class="on" aria-label="Ajuste de construção"><svg><use href="#magnet-line"/></svg></button>
        <button aria-label="Inserção inteligente"><svg><use href="#plug"/></svg></button>
        <button aria-label="Valores"><svg><use href="#value-box"/></svg></button>
        <button class="on" aria-label="Caixa de entrada"><svg><use href="#input-box"/></svg></button>
        <i></i>
        <button aria-label="Linhas"><svg><use href="#lines-wave"/></svg></button>
        <button aria-label="Arcos"><svg><use href="#lines-arc"/></svg></button>
        <button aria-label="Malha"><svg><use href="#lines-grid"/></svg></button>
      </div>
      <div class="toolbar tb-parts" role="toolbar" aria-label="Peças">
        <button aria-label="Caixa"><svg><use href="#box-ports"/></svg></button>
        <button aria-label="Nós"><svg><use href="#box-nodes"/></svg></button>
        <i></i>
        <button aria-label="Gestão de peças"><svg><use href="#cart"/></svg></button>
        <button aria-label="Texto"><svg><use href="#text-bars"/></svg></button>
      </div>
    </div>
    <div class="toolbar-row">
      <div class="toolbar tb-devices" role="toolbar" aria-label="Dispositivos">
        <button aria-label="Lista de peças"><svg><use href="#window-cart"/></svg></button>
        <button aria-label="Peças do projeto"><svg><use href="#window-cart-green"/></svg></button>
        <i></i>
        <button aria-label="Complemento"><svg><use href="#puzzle"/></svg></button>
        <i></i>
        <button aria-label="Numerar"><svg><use href="#number-list"/></svg></button>
        <button aria-label="Numerar pares"><svg><use href="#number-pair"/></svg></button>
        <button aria-label="Numerar bornes"><svg><use href="#number-stack"/></svg></button>
        <i></i>
        <button aria-label="Conexões"><svg><use href="#bars-circle"/></svg></button>
        <i></i>
        <button aria-label="Revisão concluída"><svg><use href="#flag-ok"/></svg></button>
        <button aria-label="Revisão inativa"><svg><use href="#flag-off"/></svg></button>
        <button aria-label="Próxima revisão"><svg><use href="#flag-next"/></svg></button>
        <i></i>
        <button aria-label="Bloquear revisão"><svg><use href="#flag-lock"/></svg></button>
        <button aria-label="Sincronizar revisão"><svg><use href="#flag-sync"/></svg></button>
        <i></i>
        <button aria-label="Excluir revisão"><svg><use href="#flag-delete"/></svg></button>
      </div>
      <div class="toolbar tb-pages" role="toolbar" aria-label="Páginas">
        <button class="on" aria-label="Navegador de páginas"><svg><use href="#page-tree"/></svg></button>
        <button aria-label="Nova página"><svg><use href="#page-star"/></svg></button>
        <button aria-label="Abrir página"><svg><use href="#page-gray"/></svg></button>
        <button aria-label="Fechar página"><svg><use href="#page-violet"/></svg></button>
        <button aria-label="Página anterior"><svg><use href="#page-prev"/></svg></button>
        <button aria-label="Próxima página"><svg><use href="#page-next"/></svg></button>
      </div>
      <div class="toolbar tb-macros" role="toolbar" aria-label="Macros">
        <button aria-label="Macro"><svg><use href="#macro-box"/></svg></button>
        <i></i>
        <button aria-label="Bastidor"><svg><use href="#rack"/></svg></button>
        <i></i>
        <button aria-label="Dividir"><svg><use href="#node-split"/></svg></button>
        <button aria-label="Entrada"><svg><use href="#node-in"/></svg></button>
        <button aria-label="Passagem"><svg><use href="#node-through"/></svg></button>
        <i></i>
        <button aria-label="Blocos"><svg><use href="#tiles"/></svg></button>
        <button aria-label="Posicionar nó"><svg><use href="#place-node"/></svg></button>
        <button aria-label="Posicionar fio"><svg><use href="#place-wire"/></svg></button>
        <button aria-label="Mover nó"><svg><use href="#place-node"/></svg></button>
        <button aria-label="Mover fio"><svg><use href="#place-wire"/></svg></button>
        <button aria-label="Quadro abaixo"><svg><use href="#frame-down"/></svg></button>
        <button aria-label="Quadro acima"><svg><use href="#frame-up"/></svg></button>
        <button aria-label="Onda"><svg><use href="#wire-wave"/></svg></button>
        <i></i>
        <button aria-label="Régua"><svg><use href="#angle-ruler"/></svg></button>
        <button aria-label="Hachura"><svg><use href="#hatch"/></svg></button>
        <button aria-label="Área"><svg><use href="#dash-rect"/></svg></button>
      </div>
      <div class="toolbar tb-cables" role="toolbar" aria-label="Cabos">
        <button aria-label="Borne"><svg><use href="#terminal"/></svg></button>
        <i></i>
        <button aria-label="Régua de bornes"><svg><use href="#strip"/></svg></button>
        <button aria-label="Blindagem"><svg><use href="#ring-cross"/></svg></button>
        <button aria-label="Cabo"><svg><use href="#line-cross"/></svg></button>
        <i></i>
        <button aria-label="Definição de cabo"><svg><use href="#cable-k"/></svg></button>
        <button aria-label="Ponto de conexão"><svg><use href="#ring-diamond"/></svg></button>
        <i></i>
        <button aria-label="Potencial"><svg><use href="#cable-green"/></svg></button>
      </div>
    </div>
  </div>

  <main class="workspace">
    <div class="dock">
      <section class="panel panel-pages">
        <header class="panel-head">
          <h2>Páginas - Novo projeto(2)</h2>
          <button class="caret" aria-label="Opções do painel"></button>
          <button aria-label="Fixar painel"><svg><use href="#pin"/></svg></button>
          <button class="close" aria-label="Fechar painel"><svg><use href="#cross"/></svg></button>
        </header>
        <div class="panel-tabs">
          <button class="current">Páginas - Novo projet...</button>
          <button>Dispositivos - Novo p...</button>
        </div>
        <form class="filter">
          <label for="filter">Filtro:</label>
          <div class="filter-line">
            <select id="filter"><option>- Não ativado -</option></select>
            <button type="button">...</button>
          </div>
          <label for="value">Valor:</label>
          <input id="value" type="text">
        </form>
        <div class="tree">
          <ul>
            <li class="root"><button class="toggle" aria-label="Recolher"></button><svg><use href="#k-project"/></svg><span>Novo projeto(2)</span></li>
            <li><svg><use href="#k-cover"/></svg><span>1 Capa</span></li>
            <li><svg><use href="#k-schema"/></svg><span>2 Esquema elétrico</span></li>
            <li><svg><use href="#k-schema"/></svg><span>3 Esquema elétrico</span></li>
            <li><svg><use href="#k-schema"/></svg><span>4 Esquema elétrico</span></li>
            <li><svg><use href="#k-schema"/></svg><span>5 Esquema elétrico</span></li>
            <li><svg><use href="#k-list"/></svg><span>6 Lista de peças :&nbsp; - SIE.3RV2011-1GA</span></li>
            <li class="selected"><svg><use href="#k-layout"/></svg><span>7 Layout do painel 2D</span></li>
          </ul>
          <div class="hscroll">
            <button aria-label="Rolar à esquerda"><svg viewBox="0 0 8 8"><path d="M5.500 1.500L3 4l2.500 2.500" fill="none" stroke="#333" stroke-width="1.300"/></svg></button>
            <div class="track"><div class="thumb"></div></div>
            <button aria-label="Rolar à direita"><svg viewBox="0 0 8 8"><path d="M2.500 1.500L5 4 2.500 6.500" fill="none" stroke="#333" stroke-width="1.300"/></svg></button>
          </div>
        </div>
        <div class="view-tabs"><button class="current">Árvore</button><button>Lista</button></div>
      </section>

      <section class="panel panel-preview">
        <header class="panel-head">
          <h2>Visualização gráfica</h2>
          <button class="caret" aria-label="Opções do painel"></button>
          <button aria-label="Fixar painel"><svg><use href="#pin"/></svg></button>
          <button class="close" aria-label="Fechar painel"><svg><use href="#cross"/></svg></button>
        </header>
        <svg class="preview" role="img" aria-label="Miniatura da página">
          <path d="M29.500 4.500h94v66h-94zM29.500 5.500h94" fill="none" stroke="#333"/>
          <path d="M38.500 5v2M48.500 5v2M57.500 5v2M66.500 5v2M76.500 5v2M85.500 5v2M95.500 5v2M104.500 5v2M113.500 5v2" stroke="#333"/>
          <path d="M29 67.500h94M70.500 67v3M80.500 67v3M95.500 67v3" stroke="#333"/>
          <path d="M30 67h22v3h-22zM112 67h12v2h-12zM52 70h20v1h-20z" fill="#000"/>
          <path d="M40.500 8.500h112v111h-112z" fill="none" stroke="#5557a0"/>
        </svg>
      </section>
    </div>

    <section class="document">
      <div class="doc-tabs">
        <div class="doc-tab">
          <svg class="slant" viewBox="0 0 16 16" aria-hidden="true"><path d="M0 16Q5 14 8 8T16 0v16z" fill="#bcd0e6"/></svg>
          <button class="doc-name">7</button>
          <button class="close" aria-label="Fechar página"><svg><use href="#cross"/></svg></button>
        </div>
        <button class="caret" aria-label="Lista de páginas"></button>
      </div>
      <svg class="canvas" role="img" aria-label="Layout do painel">
        <!-- sheet border and column numbers -->
        <g fill="none" stroke="#555">
          <path d="M0 17.500h475M0 30.500h475M34.500 17v13M144.500 17v13M254.500 17v13M364.500 17v13"/>
          <path d="M474.500 17v900"/>
          <path d="M0 122.500h198M0 423.500h198M0 462.500h198M198.500 83v834M237.500 83v834" stroke="#44474c"/>
          <path d="M0 82.500h237.500v50" stroke="#514f91"/>
        </g>
        <g class="col-no">
          <text x="89" y="26">6</text><text x="199" y="26">7</text><text x="309" y="26">8</text><text x="419" y="26">9</text>
        </g>
        <!-- power supply -->
        <path d="M0 142h47.500v169.500H0z" fill="#bdbdbd"/>
        <path d="M0 160h47v124H0zM0 284h34v27H0z" fill="#0cfb0c"/>
        <path d="M0 283.500h47M34.500 284v27" stroke="#27a52b"/>
        <path d="M0 142.500h47.500v169H0" fill="none" stroke="#302e72"/>
        <g class="brand"><text x="20" y="177">NIX</text><text x="20" y="187">ACT</text></g>
        <text class="rating" x="24" y="271">V 40A</text>
        <path d="M4 276.500h5M23 276.500h6" stroke="#a9e9a9"/>
        <circle cx="9.500" cy="232" r="3.500" fill="#078d16"/>
        <g fill="#6e7d6b" stroke="#264d2a">
          <circle cx="6" cy="287.500" r="4"/><circle cx="25.500" cy="287.500" r="4"/>
        </g>
        <g fill="#c5c9c4" stroke="#6b8b6d">
          <circle cx="5.500" cy="300" r="5"/><circle cx="25" cy="300" r="5"/>
        </g>
        <path d="M2 303l7-6M21.500 303l7-6" stroke="#626b62" stroke-width="2"/>
        <path d="M0 284h3v4" fill="none" stroke="#158c1e"/>
        <!-- cable duct being placed -->
        <path d="M262 216h576v46H262z" fill="#9a009f"/>
        <text class="duct-name" transform="translate(223 411) rotate(-90)">Canaleta&nbsp; 30x80 mm</text>
        <!-- crosshair -->
        <path d="M348.500 0v2000M0 236.500h4000" stroke="#8b8b8b"/>
        <path d="M349 237v12l2.700-2.500 2 4.500 2-1-2-4h3.300z" fill="#fff" stroke="#444" stroke-width=".7"/>
      </svg>
    </section>

    <aside class="side-tools">
      <div class="side-group connect" role="toolbar" aria-label="Símbolos de conexão">
        <button aria-label="Ângulo superior esquerdo"><svg><use href="#c-tl"/></svg></button>
        <button aria-label="Ângulo superior direito"><svg><use href="#c-tr"/></svg></button>
        <button aria-label="Ângulo inferior esquerdo"><svg><use href="#c-bl"/></svg></button>
        <button aria-label="Ângulo inferior direito"><svg><use href="#c-br"/></svg></button>
        <i></i>
        <button aria-label="Nó T abaixo"><svg><use href="#t-down"/></svg></button>
        <button aria-label="Nó T acima"><svg><use href="#t-up"/></svg></button>
        <button aria-label="Nó T direita"><svg><use href="#t-right"/></svg></button>
        <button aria-label="Nó T esquerda"><svg><use href="#t-left"/></svg></button>
        <i></i>
        <button aria-label="Cruzamento"><svg><use href="#t-cross"/></svg></button>
        <button aria-label="Ponte"><svg><use href="#t-zig"/></svg></button>
        <i></i>
        <button aria-label="Ponto de interrupção"><svg><use href="#jump"/></svg></button>
        <button aria-label="Conexão diagonal"><svg><use href="#diagonal"/></svg></button>
      </div>
      <div class="side-group graphics" role="toolbar" aria-label="Gráficos">
        <button aria-label="Linha"><svg><use href="#g-line"/></svg></button>
        <button aria-label="Polilinha"><svg><use href="#g-poly"/></svg></button>
        <button aria-label="Polígono"><svg><use href="#g-polygon"/></svg></button>
        <button aria-label="Retângulo"><svg><use href="#g-rect"/></svg></button>
        <button aria-label="Retângulo pelo centro"><svg><use href="#g-rect-center"/></svg></button>
        <i></i>
        <button aria-label="Círculo"><svg><use href="#g-circle"/></svg></button>
        <button aria-label="Círculo por 3 pontos"><svg><use href="#g-circle-3"/></svg></button>
        <button aria-label="Arco pelo centro"><svg><use href="#g-arc-center"/></svg></button>
        <button aria-label="Arco por 3 pontos"><svg><use href="#g-arc"/></svg></button>
        <button aria-label="Setor"><svg><use href="#g-sector"/></svg></button>
        <button aria-label="Elipse"><svg><use href="#g-ellipse"/></svg></button>
        <i></i>
        <button aria-label="Spline"><svg><use href="#g-spline"/></svg></button>
        <i></i>
        <button aria-label="Texto"><svg><use href="#g-text"/></svg></button>
        <button aria-label="Imagem"><svg><use href="#g-image"/></svg></button>
        <button aria-label="Hiperlink"><svg><use href="#g-link"/></svg></button>
        <i></i>
        <button aria-label="Cota linear"><svg><use href="#dim-line"/></svg></button>
        <button aria-label="Cota alinhada"><svg><use href="#dim-diag"/></svg></button>
        <button aria-label="Cota contínua"><svg><use href="#dim-chain"/></svg></button>
        <button aria-label="Cota incremental"><svg><use href="#dim-steps"/></svg></button>
        <button aria-label="Cota de base"><svg><use href="#dim-base"/></svg></button>
        <button aria-label="Cota angular"><svg><use href="#dim-angle"/></svg></button>
        <button aria-label="Cota de raio"><svg><use href="#dim-radius"/></svg></button>
      </div>
    </aside>
  </main>

  <footer class="statusbar">
    <span class="coords"><span>X: 743,86 mm</span><span>Y: 426,28 mm</span></span>
    <span class="cell message"></span>
    <span class="cell grid-size">ATIVAR: 1,00 mm</span>
    <span class="cell scale">Gráfico 1:2</span>
    <span class="cell flag-cell"></span>
    <span class="cell end-cell"></span>
  </footer>

  <div class="taskbar">
    <button class="start" aria-label="Iniciar"><svg viewBox="0 0 12 12"><path d="M0 1.700L5 1v4.500H0zM6 .800L12 0v5.500H6zM0 6.500h5V11l-5-.700zM6 6.500h6V12l-6-.800z" fill="#fff"/></svg></button>
    <label class="search"><svg viewBox="0 0 12 12"><circle cx="7" cy="5" r="3.700" fill="none" stroke="#333"/><path d="M4.300 7.700L1 11" stroke="#333"/></svg><input type="text" placeholder="Digite aqui para pesquisar" aria-label="Pesquisar"></label>
    <div class="apps">
      <button aria-label="Cortana"><svg viewBox="0 0 18 18"><circle cx="9" cy="9" r="4.700" fill="none" stroke="#fff" stroke-width="1.500"/></svg></button>
      <button aria-label="Visão de tarefas"><svg viewBox="0 0 18 18"><path d="M3.500 3v2.500h7V3M3.500 15v-2.500h7V15M3.500 7.500h7v3h-7zM13.500 3v12M12 7h3" fill="none" stroke="#ddd"/></svg></button>
      <button aria-label="Edge"><svg viewBox="0 0 18 18"><circle cx="9" cy="9" r="8" fill="#1784d0"/><path d="M2 6a8 8 0 0 1 15 3c0 4-5 4-6 2 2-5-5-8-9-5z" fill="#4bca8a"/><path d="M1 8c4-5 10-2 9 2-2 2 1 4 5 3-2 5-10 5-13 0z" fill="#1669b5"/><path d="M8 8c-2 3 0 6 4 7h3c-4-1-6-4-5-6z" fill="#153f83"/></svg></button>
      <button class="running" aria-label="Explorador de arquivos"><svg viewBox="0 0 18 18"><path d="M2 3h5l1 2h8v10H2z" fill="#e3ad34"/><path d="M2 7h14v8H2z" fill="#ffd978"/><path d="M5 10h8v5h-2v-3H7v3H5z" fill="#4796bd"/></svg></button>
      <button aria-label="Loja"><svg viewBox="0 0 18 18"><path d="M6 5V2h6v3" fill="none" stroke="#ddd" stroke-width="1.500"/><path d="M1 5h16v12H1z" fill="#fff"/><path d="M6 7h3v3H6z" fill="#dd5b37"/><path d="M10 7h3v3h-3z" fill="#79ad38"/><path d="M6 11h3v3H6z" fill="#379bce"/><path d="M10 11h3v3h-3z" fill="#e2b536"/></svg></button>
      <button aria-label="E-mail"><svg viewBox="0 0 18 18"><path d="M1 6l8-5 8 5v10H1z" fill="#1272b8"/><path d="M3 5h12v5H3z" fill="#e1f5ff"/><path d="M1 6l8 6 8-6v11H1z" fill="#30aee9"/><path d="M17 6v11H7z" fill="#1886cb"/></svg></button>
      <button aria-label="Ferramenta de captura"><svg viewBox="0 0 18 18"><ellipse cx="8" cy="6.500" rx="7.500" ry="4.500" transform="rotate(-15 8 7)" fill="#eee" stroke="#c55d64"/><path d="M6 6l8 8M13 6l-3 9" stroke="#a9cde0" stroke-width="1.500"/><circle cx="14" cy="13" r="2" fill="none" stroke="#3f8fbc" stroke-width="1.500"/><circle cx="10" cy="15" r="1.800" fill="none" stroke="#3f8fbc" stroke-width="1.500"/></svg></button>
      <button class="running" aria-label="Chrome"><svg viewBox="0 0 18 18"><circle cx="9" cy="9" r="8" fill="#f0c23d"/><path d="M9 9L2 5a8 8 0 0 1 14 0H9z" fill="#d94c40"/><path d="M9 9v8A8 8 0 0 1 2 5l4 6z" fill="#2aa45a"/><circle cx="9" cy="9" r="3.900" fill="#fff"/><circle cx="9" cy="9" r="3" fill="#3a7fe0"/></svg></button>
      <button class="running" aria-label="OBS"><svg viewBox="0 0 18 18"><circle cx="9" cy="9" r="7.300" fill="#202427" stroke="#c9c9c9" stroke-width="1.200"/><path d="M9 9Q5 8 6 4.500M9 9q4-2 5 1.500M9 9q0 4-4 4" fill="none" stroke="#bbb" stroke-width="1.300"/></svg></button>
      <button class="running active" aria-label="EPLAN"><svg viewBox="-1 -1 18 18"><use href="#eplan" width="16" height="16"/></svg></button>
    </div>
    <div class="tray">
      <button aria-label="Ícones ocultos"><svg viewBox="0 0 12 12"><path d="M2 8l4-4 4 4" fill="none" stroke="#ddd"/></svg></button>
      <button aria-label="Captura"><svg viewBox="0 0 12 12"><path d="M1 2l10-1v9L1 9zM4 3v4M4 5l3-2M5 5l2 2" fill="none" stroke="#ddd"/><circle cx="9.500" cy="9.500" r="2.300" fill="#e8a12e"/></svg></button>
      <button aria-label="Microfone"><svg viewBox="0 0 12 12"><rect x="4" y="0" width="4" height="8" rx="1.500" fill="#eee"/><path d="M2.500 6v2q0 2 3.500 2t3.500-2V6M6 10v2" fill="none" stroke="#ccc"/></svg></button>
      <button aria-label="Bateria"><svg viewBox="0 0 12 12"><path d="M.5 3.500h9v5h-9zM11 5v2" fill="none" stroke="#ddd"/><path d="M2 5h4v2H2z" fill="#eee"/></svg></button>
      <button aria-label="Wi-Fi"><svg viewBox="0 0 12 12"><path d="M2 11a9 9 0 0 1 9-9M4.500 11A6.500 6.500 0 0 1 11 4.500M7 11a4 4 0 0 1 4-4" fill="none" stroke="#bbb"/><circle cx="10" cy="10" r="1" fill="#eee"/></svg></button>
      <button aria-label="Volume"><svg viewBox="0 0 12 12"><path d="M1 4.500h2l3-3v9l-3-3H1zM7.500 4q1.500 2 0 4M9.500 2.500q2.500 3.500 0 7" fill="none" stroke="#ccc"/></svg></button>
      <span class="lang">POR<br>PTB2</span>
      <span class="clock">21:44<br>11/05/2021</span>
      <button class="notify"><svg viewBox="0 0 18 18" aria-hidden="true"><path d="M2 2h11v9H6l-2 2v-2H2z" fill="#eee"/><path d="M4 4.500h7M4 6.500h7M4 8.500h4" stroke="#29323f"/></svg><b>2</b></button>
    </div>
  </div>
</div>
</body>
</html>
```

FILE: styles.css
```css
* { box-sizing: border-box; }

body {
  margin: 0;
  background: #000;
  color: #222;
  font: 8px/12px "Open Sans", "Noto Sans", sans-serif;
}

button, input, select { font: inherit; color: inherit; }
button { margin: 0; padding: 0; border: 0; background: none; }
h1, h2 { margin: 0; font: inherit; }
ul { margin: 0; padding: 0; list-style: none; }
svg { display: block; }
.sprite { display: none; }

.app {
  display: flex;
  flex-direction: column;
  height: 100vh;
  margin: 0 5%;
  background: #fff;
}

/* title and menu */
.titlebar {
  display: flex;
  align-items: center;
  height: 16px;
  padding: 0 2px 0 1px;
  gap: 3px;
}
.titlebar h1 { flex: 1; }
.app-icon { width: 11px; height: 11px; }
.window-buttons { display: flex; }
.window-buttons button { display: grid; place-items: center; width: 31px; height: 14px; }
.window-buttons svg { width: 10px; height: 10px; }

.menubar {
  display: flex;
  gap: 9px;
  height: 16px;
  padding-left: 11px;
  border-bottom: 1px solid #ddd;
}

/* toolbars */
.toolbars { padding-top: 1px; border-bottom: 1px solid #bdbdbd; }
.toolbar-row { display: flex; height: 19px; }
.toolbar-row:last-child { height: 18px; }
.toolbar {
  display: flex;
  justify-content: space-between;
  align-items: center;
  height: 18px;
  padding: 0 1px 0 5px;
  border-right: 1px solid #aaa;
  border-bottom: 1px solid #bbb;
  position: relative;
}
.toolbar::before {
  content: "";
  position: absolute;
  left: 1px;
  top: 3px;
  bottom: 2px;
  border-left: 1px dotted #999;
}
.toolbar button, .side-group button { flex: none; width: 16px; height: 16px; }
.toolbar svg, .side-group svg { width: 16px; height: 16px; }
.toolbar i { flex: none; width: 5px; height: 13px; background: linear-gradient(#bbb, #bbb) center / 1px 100% no-repeat; }
.toolbar .on { background: #c9e5fa; }
.letter { position: relative; }
.letter b { position: absolute; right: 1px; bottom: 1px; color: #a63a24; font-size: 8px; line-height: 8px; }
.tb-file { width: 319px; margin-left: 2px; }
.tb-view { width: 408px; margin-left: 35px; }
.tb-parts { width: 78px; }
.tb-devices { width: 253px; margin-left: 2px; }
.tb-pages { width: 107px; padding-left: 6px; }
.tb-macros { width: 293px; padding-left: 7px; }
.tb-cables { width: 138px; margin-left: 40px; }

/* workspace */
.workspace { flex: 1; display: flex; min-height: 0; background: #f5f5f5; }
.dock { display: flex; flex-direction: column; gap: 4px; width: 184px; border-right: 1px solid #ccc; background: #fafafa; }
.panel { background: #f0f0f0; border: 1px solid #bbb; border-width: 0 0 1px 1px; }
.panel-head {
  display: flex;
  align-items: center;
  gap: 3px;
  height: 16px;
  padding: 0 2px;
  background: linear-gradient(#bccbdc, #d9e4f2);
}
.panel-head h2 { flex: 1; }
.panel-head button { width: 9px; height: 9px; }
.panel-head svg { width: 8px; height: 8px; }
.close { background: #b03748; border: 1px solid #8f2d3b; }
.close svg { width: 100%; height: 100%; }
.caret { display: grid; place-items: center; width: 9px; height: 9px; }
.caret::after { content: ""; border: 3px solid transparent; border-top-color: #000; border-bottom: 0; }

.panel-pages { display: flex; flex-direction: column; flex: 1; min-height: 0; }
.panel-tabs { display: flex; height: 20px; align-items: center; background: #f6f6f6; }
.panel-tabs button { height: 16px; padding: 0 3px 0 4px; white-space: nowrap; }
.panel-tabs button:last-child { padding: 0 1px; border-right: 1px solid #aaa; }
.panel-tabs button:not(.current), .view-tabs button:not(.current) { color: #999; }
.filter {
  display: flex;
  flex-direction: column;
  margin-right: 4px;
  padding: 3px 1px 7px 3px;
  border-top: 1px solid #999;
}
.filter-line { display: flex; gap: 6px; height: 15px; margin: 2px 0 4px; }
.filter select {
  flex: 1;
  min-width: 0;
  padding: 0 2px;
  border: 1px solid #aaa;
  border-radius: 0;
  appearance: none;
  background: #e4e4e4 url("data:image/svg+xml,%3Csvg xmlns='http://www.w3.org/2000/svg' width='8' height='8'%3E%3Cpath d='M1.500 2.500L4 5l2.500-2.500' fill='none' stroke='%23555'/%3E%3C/svg%3E") right 2px center no-repeat;
}
.filter-line button { width: 16px; border: 1px solid #aaa; background: #e4e4e4; line-height: 10px; }
.filter input { height: 14px; margin-top: 1px; border: 1px solid #888; border-radius: 0; background: #f0f0f0; }

.tree {
  display: flex;
  flex-direction: column;
  flex: 1;
  min-height: 0;
  margin: 0 4px 0 3px;
  border: 1px solid #999;
  background: #fff;
  overflow: hidden;
}
.tree ul {
  flex: none;
  display: grid;
  grid-auto-rows: 1fr;
  height: 99px;
  margin-bottom: auto;
  background: linear-gradient(#aaa, #aaa) 20px 12px / 1px 82px no-repeat;
  font-family: Roboto, "Open Sans", sans-serif;
}
.tree li { display: flex; align-items: center; gap: 2px; padding-left: 28px; white-space: nowrap; }
.tree li::before { content: ""; flex: none; width: 8px; margin-left: -8px; margin-right: -2px; border-top: 1px dotted #aaa; }
.tree .root::before { display: none; }
.tree .root { padding-left: 3px; gap: 4px; }
.tree svg { flex: none; width: 12px; height: 12px; }
.tree .root svg { width: 11px; height: 11px; }
.tree li > span { padding-left: 1px; }
.tree .selected span { flex: 1; background: #e3e3e3; font-weight: 700; }
.toggle { width: 7px; height: 7px; border: 1px solid #aaa; display: grid; place-items: center; }
.toggle::after { content: ""; width: 3px; height: 1px; background: #555; }
.hscroll { flex: none; display: flex; height: 11px; background: #f0f0f0; }
.hscroll button { width: 12px; display: grid; place-items: center; }
.hscroll svg { width: 8px; height: 8px; }
.track { flex: 1; }
.thumb { width: 88%; height: 10px; background: #cdcdcd; }
.view-tabs { display: flex; height: 18px; margin: 1px 4px 0 3px; border-top: 1px solid #555; background: #f6f6f6; }
.view-tabs button { height: 16px; padding: 0 4px; }
.view-tabs .current { border-right: 1px solid #555; border-bottom: 1px solid #999; }

.panel-preview { height: 143px; }
.preview { width: 100%; height: 124px; margin-top: 1px; border: 1px solid #888; border-width: 1px 1px 1px 0; background: #fff; overflow: hidden; }

.document { flex: 1; min-width: 0; display: flex; flex-direction: column; margin: 0 1px 0 4px; }
.doc-tabs { display: flex; justify-content: space-between; align-items: center; height: 17px; padding-right: 3px; }
.doc-tab { display: flex; align-items: center; height: 16px; align-self: flex-end; border-right: 1px solid #bbb; padding-right: 5px; background: #fafafa; }
.doc-tab .slant { width: 16px; height: 16px; }
.doc-name { width: 13px; text-align: center; font-weight: 700; }
.doc-tab .close { width: 11px; height: 11px; margin-left: 2px; }
.canvas {
  flex: 1;
  min-height: 0;
  width: 100%;
  border: 2px solid #a9c0d3;
  border-top: 1px solid #777;
  background: #fff;
  overflow: hidden;
}
.canvas text { text-anchor: middle; }
.canvas .col-no text { fill: #555; font-size: 6px; }
.canvas .brand text, .canvas .rating { fill: #b4dcb4; font-size: 8px; font-weight: 800; text-anchor: end; }
.canvas .duct-name { fill: #0a0ab4; font-size: 15px; }

.side-tools { width: 20px; padding-right: 1px; border-left: 1px solid #bbb; background: #fff; overflow: hidden; }
.side-group {
  display: flex;
  flex-direction: column;
  justify-content: space-between;
  align-items: center;
  border-top: 1px dotted #999;
}
.side-group i { flex: none; width: 14px; height: 5px; background: linear-gradient(#bbb, #bbb) center / 100% 1px no-repeat; }
.connect { height: 221px; padding: 4px 0 4px; margin-top: 2px; }
.graphics { height: 390px; padding: 5px 0 0; }

/* status bar */
.statusbar { display: flex; height: 15px; line-height: 13px; background: #f0f0f0; border-top: 1px solid #ccc; }
.coords { display: flex; gap: 7px; width: 566px; padding-left: 4px; }
.cell { padding-left: 2px; border-left: 1px solid #ddd; color: #777; }
.message { flex: 1; }
.grid-size { width: 131px; }
.scale { width: 77px; }
.flag-cell { width: 50px; }
.end-cell { width: 36px; }

/* taskbar */
.taskbar { display: flex; height: 27px; background: linear-gradient(90deg, #20393d, #22383f 55%, #1b283c 85%); color: #fff; }
.start { width: 33px; display: grid; place-items: center; }
.start svg { width: 12px; height: 12px; }
.search { display: flex; align-items: center; gap: 6px; width: 236px; padding-left: 8px; background: #f2f2f2; color: #444; }
.search svg { width: 13px; height: 13px; }
.search input { flex: 1; min-width: 0; height: 22px; padding: 0; border: 0; background: none; font-size: 10px; }
.search input::placeholder { color: #444; opacity: 1; }
.apps { display: grid; grid-template-columns: repeat(10, 1fr); width: 336px; }
.apps button { display: grid; place-items: center; border-bottom: 2px solid transparent; }
.apps svg { width: 18px; height: 18px; }
.apps .running { background: linear-gradient(#76b9ed, #76b9ed) center bottom / 28px 2px no-repeat; background-origin: border-box; background-clip: border-box; }
.apps .active { background-color: #4b5a61; background-size: 100% 2px; }
.tray { display: flex; align-items: center; margin-left: auto; text-align: center; }
.tray button { width: 16px; display: grid; place-items: center; }
.tray svg { width: 12px; height: 12px; }
.lang { width: 26px; }
.clock { width: 48px; }
.tray .notify { position: relative; width: 36px; height: 27px; padding-right: 4px; border-right: 1px solid #566; }
.tray .notify svg { width: 18px; height: 18px; }
.notify b { position: absolute; right: 10px; bottom: 3px; width: 11px; height: 11px; border-radius: 50%; background: #333c48; border: 1px solid #aaa; font-size: 8px; line-height: 9px; }
```
